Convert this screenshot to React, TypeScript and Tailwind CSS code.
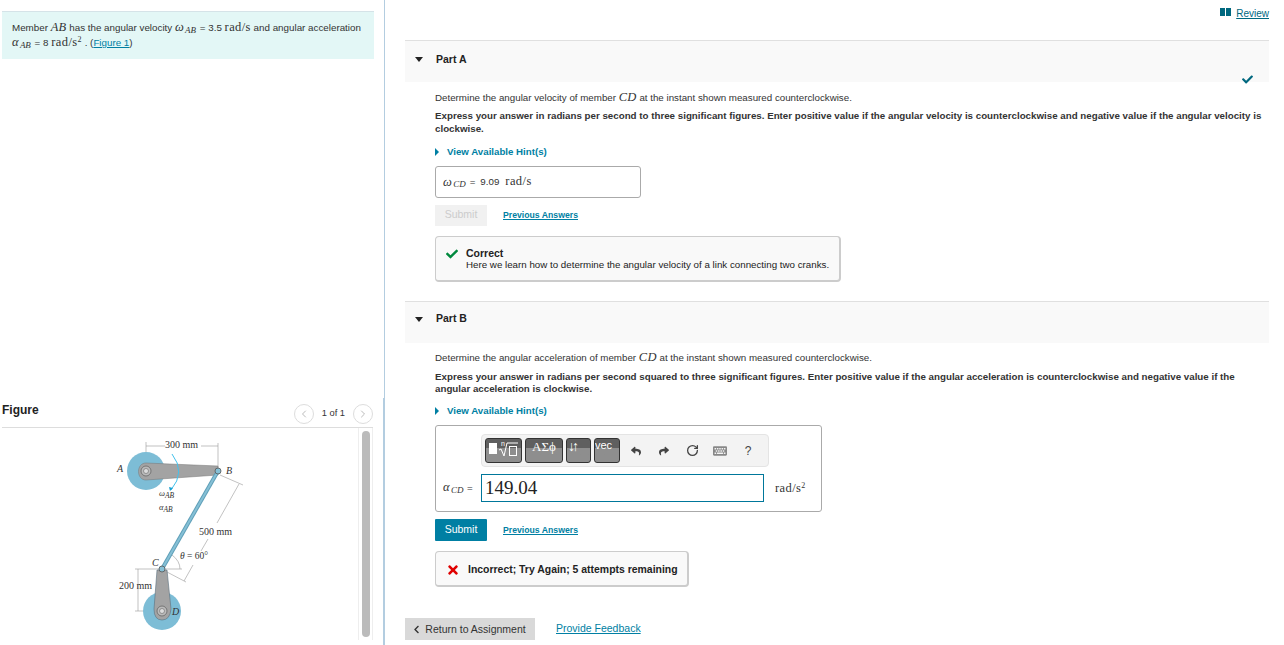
import { FaCheck, FaChevronLeft, FaKeyboard, FaReply, FaShare, FaTimes } from "react-icons/fa";
import { ChevronLeft, ChevronRight, RotateCw } from "lucide-react";
import type { ReactNode } from "react";

const serif = "font-['Liberation_Serif',serif]";

function M({ children }: { children: ReactNode }) {
  return <span className={`${serif} text-[12.5px] leading-none tracking-[0.3px] italic`}>{children}</span>;
}

function Sub({ children }: { children: ReactNode }) {
  return <sub className={`${serif} mx-[1px] text-[9px] leading-none italic`}>{children}</sub>;
}

function Unit({ sup }: { sup?: boolean }) {
  return (
    <span className={`${serif} text-[12.5px] leading-none tracking-[0.4px]`}>
      rad/s{sup ? <sup className="text-[8px] leading-none">2</sup> : null}
    </span>
  );
}

function PartHeader({ title, check }: { title: string; check?: boolean }) {
  return (
    <div className={`relative flex h-[42px] items-center border-t border-[#e0e0e0] bg-[#f9f9f9] pl-[10px] ${check ? "pb-[4px]" : "pb-[6px]"}`}>
      <span className="h-0 w-0 border-x-[4px] border-t-[5px] border-x-transparent border-t-[#222]" />
      <span className="ml-[13px] text-[10.5px] font-bold text-[#222]">{title}</span>
      {check ? <FaCheck className="absolute top-[33px] right-[16px] text-[11px] text-[#00687f]" /> : null}
    </div>
  );
}

function HintLink() {
  return (
    <div className="flex items-center text-[9.7px] font-bold text-[#007fa3]">
      <span className="h-0 w-0 border-y-[4px] border-l-[4px] border-y-transparent border-l-[#007fa3]" />
      <span className="ml-[8px]">View Available Hint(s)</span>
    </div>
  );
}

function PreviousAnswers() {
  return <span className="ml-[16px] text-[8.7px] font-bold text-[#007fa3] underline">Previous Answers</span>;
}

function ToolButton({ children, w }: { children: ReactNode; w: string }) {
  return (
    <div
      className={`flex h-[25px] items-start overflow-hidden rounded-[3px] border border-[#333] bg-gradient-to-b from-[#5f5f5f] from-40% to-[#8e8e8e] to-40% text-white ${w}`}
    >
      {children}
    </div>
  );
}

function ToolIcon({ children }: { children: ReactNode }) {
  return <span className="flex w-[28px] justify-center">{children}</span>;
}

function Figure() {
  return (
    <svg width="360" height="217" viewBox="0 33 360 217" className="block">
      <g fill="none" stroke="#999" strokeWidth="0.6">
        <path d="M146 51H165M201 51H218M146 47V75M218 48V75" />
        <path d="M239 89L217 128M208 144L201 156M193 170L184 186M220 80L243 90M167 177L186 187" />
        <path d="M135 174H162M138 174V216M135 216H155" />
        <path d="M162 174H182M172 160Q180 166 180 174" />
      </g>
      <circle cx="146" cy="76" r="19" fill="#7dbdd6" />
      <circle cx="162" cy="216" r="19" fill="#7dbdd6" />
      <path d="M146 68L218 71V80L146 85C136 85 136 68 146 68Z" fill="#a3a3a3" stroke="#777" strokeWidth="0.5" />
      <path d="M157 175H167L171 214Q170 225 162 225Q154 225 154 214Z" fill="#a3a3a3" stroke="#5b7080" strokeWidth="0.6" />
      <path d="M218 76L162 174" stroke="#5f9fb8" strokeWidth="4" />
      <path d="M218 76L162 174" stroke="#85c0d6" strokeWidth="2" />
      <circle cx="146" cy="76" r="5" fill="#bbb" stroke="#666" strokeWidth="0.8" />
      <circle cx="146" cy="76" r="2.5" fill="#ddd" stroke="#666" strokeWidth="0.6" />
      <circle cx="162" cy="216" r="5" fill="#bbb" stroke="#666" strokeWidth="0.8" />
      <circle cx="162" cy="216" r="2.5" fill="#ddd" stroke="#666" strokeWidth="0.6" />
      <circle cx="218" cy="76" r="3" fill="#85c0d6" stroke="#555" strokeWidth="0.8" />
      <circle cx="162" cy="174" r="3" fill="#85c0d6" stroke="#555" strokeWidth="0.8" />
      <path d="M172 59Q186 77 171 95" fill="none" stroke="#42c1ec" strokeWidth="1" />
      <path d="M173 93L170 96L169 92Z" fill="#1a9fd0" />
      <g fontFamily="'Liberation Serif', serif" fill="#333" fontSize="10">
        <text x="165" y="53">300 mm</text>
        <text x="199" y="140">500 mm</text>
        <text x="119" y="194">200 mm</text>
        <text x="180" y="164" fontSize="9.5"><tspan fontStyle="italic">θ</tspan> = 60°</text>
        <g fontStyle="italic">
          <text x="117" y="77">A</text>
          <text x="226" y="79">B</text>
          <text x="152" y="171">C</text>
          <text x="172" y="220">D</text>
          <text x="159" y="101" fontSize="8.5">ω<tspan fontSize="7.5" dy="2">AB</tspan></text>
          <text x="159" y="115" fontSize="8.5">α<tspan fontSize="7.5" dy="2">AB</tspan></text>
        </g>
      </g>
    </svg>
  );
}

export default function App() {
  return (
    <div className="flex h-[645px] w-[1284px] overflow-hidden bg-white font-['Liberation_Sans',sans-serif] text-[#333]">
      <aside className="relative flex h-full w-[385px] shrink-0 flex-col border-r border-[#b3cde0] pl-[2px]">
        <div className="absolute top-[398px] right-[-1px] h-[247px] w-[2px] bg-[#b3cde0]" />
        <div className="mt-[11px] h-[48px] w-[372px] border-t border-[#d5e3e8] bg-[#e3f7f6] px-[10px] pt-[8px] text-[9.8px] leading-[15px]">
          <div className="whitespace-nowrap">
            Member <M>AB</M> has the angular velocity <M>ω</M><Sub>AB</Sub> = 3.5 <Unit /> and angular acceleration
          </div>
          <div className="whitespace-nowrap">
            <M>α</M><Sub>AB</Sub> = 8 <Unit sup /> . (<span className="text-[#007fa3] underline">Figure 1</span>)
          </div>
        </div>

        <div className="mt-[342px] flex h-[27px] w-[371px] items-start justify-between border-b border-[#ddd]">
          <span className="text-[12px] leading-[18px] font-bold text-[#222]">Figure</span>
          <div className="mt-[3px] flex items-center text-[9.3px]">
            <span className="flex h-[20px] w-[20px] items-center justify-center rounded-full border border-[#ddd] text-[#bbb]">
              <ChevronLeft size={12} />
            </span>
            <span className="mx-[8px]">1 of 1</span>
            <span className="flex h-[20px] w-[20px] items-center justify-center rounded-full border border-[#ddd] text-[#bbb]">
              <ChevronRight size={12} />
            </span>
          </div>
        </div>

        <div className="relative h-[217px] w-[371px]">
          <div className="-ml-[2px]">
            <Figure />
          </div>
          <div className="absolute top-0 right-0 h-[212px] w-[15px] border-x border-[#eee]">
            <div className="mx-auto mt-[3px] h-[206px] w-[8px] rounded-full bg-[#bbb]" />
          </div>
        </div>
      </aside>

      <main className="w-[884px] pl-[20px]">
        <div className="flex h-[40px] items-start justify-end pt-[6px] text-[10px]">
          <span className="mt-[2px] flex gap-[1px]">
            <span className="h-[8px] w-[5px] bg-[#00687f]" />
            <span className="h-[8px] w-[5px] bg-[#00687f]" />
          </span>
          <span className="ml-[2px] pl-[3px] text-[#00687f] underline">Review</span>
        </div>

        <PartHeader title="Part A" check />
        <div className="pl-[30px] text-[9.75px] text-[#333]">
          <p className="mt-[9px] leading-[14px]">
            Determine the angular velocity of member <M>CD</M> at the instant shown measured counterclockwise.
          </p>
          <p className="mt-[5px] leading-[12.5px] font-bold">
            Express your answer in radians per second to three significant figures. Enter positive value if the angular velocity is counterclockwise and negative value if the angular velocity is clockwise.
          </p>
          <div className="mt-[10px]">
            <HintLink />
          </div>
          <div className="mt-[6px] flex h-[32px] w-[206px] items-center rounded-[3px] border border-[#aaa] pt-[2px] pl-[7px]">
            <M>ω</M><Sub>CD</Sub>
            <span className="ml-[3px]">=</span>
            <span className="ml-[5px]">9.09</span>
            <span className="ml-[6px]"><Unit /></span>
          </div>
          <div className="mt-[7px] flex h-[21px] items-center">
            <span className="flex h-[21px] w-[52px] items-center justify-center bg-[#f1f1f1] text-[10.5px] text-[#ccc]">Submit</span>
            <PreviousAnswers />
          </div>
          <div className="mt-[10px] flex h-[46px] w-[406px] items-start rounded-[4px] border border-r-2 border-b-2 border-[#ccc] bg-[#f9f9f9] pt-[10px] pl-[10px]">
            <FaCheck className="mt-[1px] text-[12px] text-[#00893e]" />
            <div className="ml-[8px] text-[#222]">
              <div className="text-[10.5px] leading-[12px] font-bold">Correct</div>
              <div className="leading-[12px]">Here we learn how to determine the angular velocity of a link connecting two cranks.</div>
            </div>
          </div>
        </div>

        <div className="mt-[19px]">
          <PartHeader title="Part B" />
        </div>
        <div className="pl-[30px] text-[9.75px] text-[#333]">
          <p className="mt-[8px] leading-[14px]">
            Determine the angular acceleration of member <M>CD</M> at the instant shown measured counterclockwise.
          </p>
          <p className="mt-[6px] pr-[30px] leading-[12.5px] font-bold">
            Express your answer in radians per second squared to three significant figures. Enter positive value if the angular acceleration is counterclockwise and negative value if the angular acceleration is clockwise.
          </p>
          <div className="mt-[8px]">
            <HintLink />
          </div>
          <div className="mt-[7px] h-[87px] w-[387px] rounded-[3px] border border-[#aaa]">
            <div className="mt-[8px] ml-[45px] flex h-[33px] w-[288px] items-center gap-[3px] rounded-[4px] border border-[#e4e4e4] bg-[#f3f3f3] pl-[3px] text-[#444]">
              <ToolButton w="w-[37px] justify-center">
                <span className="mt-[4px] mr-[1px] h-[11px] w-[8px] shrink-0 bg-white" />
                <svg width="21" height="18" viewBox="0 0 21 18" className="mt-[1px] shrink-0">
                  <text x="3" y="6" fontSize="7" fill="#fff" fontFamily="'Liberation Sans', sans-serif">n</text>
                  <path d="M1 10L3 9L6 16L9 3H20" fill="none" stroke="#fff" />
                  <rect x="11.5" y="6.5" width="7" height="9" fill="none" stroke="#fff" />
                </svg>
              </ToolButton>
              <ToolButton w="w-[38px] justify-center">
                <span className={`${serif} text-[13px] leading-[15px]`}>ΑΣϕ</span>
              </ToolButton>
              <ToolButton w="w-[25px] pl-[1px]">
                <span className="text-[14px] leading-[14px] font-bold tracking-[-3px]">↓↑</span>
              </ToolButton>
              <ToolButton w="w-[26px]">
                <span className="text-[11px] leading-[12px]">vec</span>
              </ToolButton>
              <div className="-ml-[1px] flex items-center">
                <ToolIcon><FaReply size={10} /></ToolIcon>
                <ToolIcon><FaShare size={10} /></ToolIcon>
                <ToolIcon><RotateCw size={13} strokeWidth={2.4} /></ToolIcon>
                <ToolIcon><FaKeyboard size={14} className="text-[#888]" /></ToolIcon>
                <ToolIcon><span className="text-[12px]">?</span></ToolIcon>
              </div>
            </div>
            <div className="mt-[7px] flex items-center">
              <span className="ml-[7px] w-[38px] whitespace-nowrap">
                <M>α</M><Sub>CD</Sub> =
              </span>
              <div className={`flex h-[28px] w-[283px] items-center border border-[#00779b] pl-[3px] text-[19px] text-[#222] ${serif}`}>
                149.04
              </div>
              <span className="mt-[3px] ml-[11px]"><Unit sup /></span>
            </div>
          </div>
          <div className="mt-[7px] flex h-[22px] items-center">
            <span className="flex h-[22px] w-[52px] items-center justify-center rounded-[1px] bg-[#007fa3] text-[10.5px] text-white">Submit</span>
            <PreviousAnswers />
          </div>
          <div className="mt-[10px] flex h-[36px] w-[254px] items-center rounded-[4px] border border-r-2 border-b-2 border-[#ccc] bg-[#f9f9f9] pt-[3px] pl-[10px]">
            <FaTimes className="text-[14px] text-[#e00000]" />
            <span className="ml-[8px] text-[10.45px] font-bold text-[#222]">Incorrect; Try Again; 5 attempts remaining</span>
          </div>
        </div>

        <div className="mt-[31px] flex items-center text-[10.5px]">
          <span className="flex h-[22px] w-[130px] items-center justify-center gap-[4px] bg-[#d9d9d9] pt-[1px] pr-[2px] text-[#333]">
            <FaChevronLeft size={9} />
            Return to Assignment
          </span>
          <span className="ml-[21px] text-[#007fa3] underline">Provide Feedback</span>
        </div>
      </main>
    </div>
  );
}
